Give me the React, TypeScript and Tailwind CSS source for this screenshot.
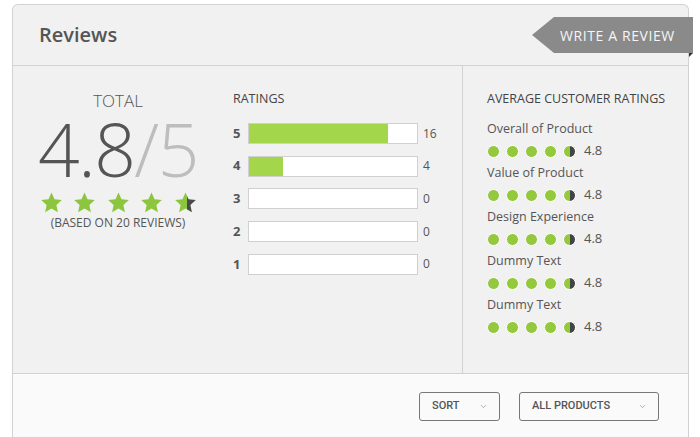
import { ChevronDown } from "lucide-react";

const FONT = "font-['Open_Sans',sans-serif]";

// fill is the visual share of the bar in the original design
const BARS = [
  { star: 5, count: 16, fill: 83 },
  { star: 4, count: 4, fill: 20 },
  { star: 3, count: 0, fill: 0 },
  { star: 2, count: 0, fill: 0 },
  { star: 1, count: 0, fill: 0 },
];

const AVERAGES = [
  "Overall of Product",
  "Value of Product",
  "Design Experience",
  "Dummy Text",
  "Dummy Text",
];

const STAR_PATH =
  "M12 1.5l3.2 7.1 7.6.8-5.7 5.2 1.6 7.6L12 18.3l-6.7 3.9 1.6-7.6L1.2 9.4l7.6-.8z";

function Star({ partial }: { partial?: boolean }) {
  return (
    <svg width="23" height="22" viewBox="0 0 24 23">
      {partial && (
        <defs>
          <linearGradient id="half-star">
            <stop offset="58%" stopColor="#8cc63f" />
            <stop offset="58%" stopColor="#4a4a4a" />
          </linearGradient>
        </defs>
      )}
      <path d={STAR_PATH} fill={partial ? "url(#half-star)" : "#8cc63f"} />
    </svg>
  );
}

function Dots() {
  return (
    <div className="flex items-center gap-[6px]">
      {[0, 1, 2, 3].map((i) => (
        <span
          key={i}
          className="h-[13px] w-[13px] rounded-full border-[1.5px] border-white bg-[#95c93d]"
        />
      ))}
      <span className="h-[13px] w-[13px] rounded-full border-[1.5px] border-white bg-[linear-gradient(to_right,#95c93d_55%,#444_55%)]" />
      <span className="ml-[2px] text-[13px] text-[#555]">4.8</span>
    </div>
  );
}

export default function App() {
  return (
    <main className={`min-h-screen bg-white pl-[12px] pt-[4px] ${FONT}`}>
      <div className="relative w-[677px] rounded-t-[6px] border border-b-0 border-[#d2d2d2] bg-[#f1f1f1]">
        <header className="flex h-[61px] items-center border-b border-[#d2d2d2] px-[26px]">
          <h1 className="text-[20px] font-semibold text-[#555]">Reviews</h1>
        </header>

        <button
          type="button"
          className="absolute right-[-5px] top-[12px] h-[36px] w-[161px] bg-[#8a8a8a] pl-[28px] text-left text-[14px] tracking-[0.6px] text-[#f6f6f6] [clip-path:polygon(22px_0,100%_0,100%_100%,22px_100%,0_50%)]"
        >
          WRITE A REVIEW
        </button>
        <span className="absolute right-[-5px] top-[48px] h-[4px] w-[4px] bg-[#333] [clip-path:polygon(0_0,100%_0,0_100%)]" />

        <section className="flex h-[307px]">
          <div className="flex w-[449px]">
            <div className="flex w-[210px] flex-col items-center pt-[26px] text-[#555]">
              <div className="text-[17px] font-light leading-[18px]">TOTAL</div>
              <div className="mt-[4px] text-[73px] font-light leading-[70px] tracking-[-1.5px]">
                4.8<span className="text-[#bdbdbd]">/5</span>
              </div>
              <div className="mt-[7px] flex gap-[10.5px]">
                <Star />
                <Star />
                <Star />
                <Star />
                <Star partial />
              </div>
              <div className="mt-[2px] text-[12px] leading-[15px]">
                (BASED ON 20 REVIEWS)
              </div>
            </div>

            <div className="ml-[10px] pt-[25px] text-[#555]">
              <div className="text-[12.5px] leading-[16px] text-[#444]">RATINGS</div>
              <div className="mt-[16px] flex flex-col gap-[11.7px]">
                {BARS.map((bar) => (
                  <div key={bar.star} className="flex h-[21px] items-center">
                    <span className="w-[15px] text-[13px] font-bold">{bar.star}</span>
                    <div className="h-[21px] w-[170px] border border-[#d0d0d0] bg-white">
                      <div
                        className="h-full bg-[#a3d64a]"
                        style={{ width: `${bar.fill}%` }}
                      />
                    </div>
                    <span className="ml-[5px] text-[12px]">{bar.count}</span>
                  </div>
                ))}
              </div>
            </div>
          </div>

          <div className="flex-1 border-l border-[#d2d2d2] pl-[24px] pt-[25px] text-[#555]">
            <div className="text-[12.5px] leading-[16px] text-[#444]">
              AVERAGE CUSTOMER RATINGS
            </div>
            <div className="mt-[11px]">
              {AVERAGES.map((label, i) => (
                <div key={i}>
                  <div className="h-[22px] text-[12.5px] leading-[22px]">{label}</div>
                  <div className="flex h-[22px] items-center">
                    <Dots />
                  </div>
                </div>
              ))}
            </div>
          </div>
        </section>

        <footer className="flex h-[80px] items-start justify-end gap-[19px] border-t border-[#d2d2d2] bg-[#fafafa] pr-[29px] pt-[18px] font-['Roboto',sans-serif] text-[11px] font-medium text-[#555]">
          <div className="flex h-[29px] w-[81px] items-center justify-between rounded-[3px] border border-[#777] pl-[12px] pr-[11px]">
            SORT
            <ChevronDown size={9} strokeWidth={1.5} className="text-[#777]" />
          </div>
          <div className="flex h-[29px] w-[140px] items-center justify-between rounded-[3px] border border-[#777] pl-[12px] pr-[11px]">
            ALL PRODUCTS
            <ChevronDown size={9} strokeWidth={1.5} className="text-[#777]" />
          </div>
        </footer>
      </div>
    </main>
  );
}
